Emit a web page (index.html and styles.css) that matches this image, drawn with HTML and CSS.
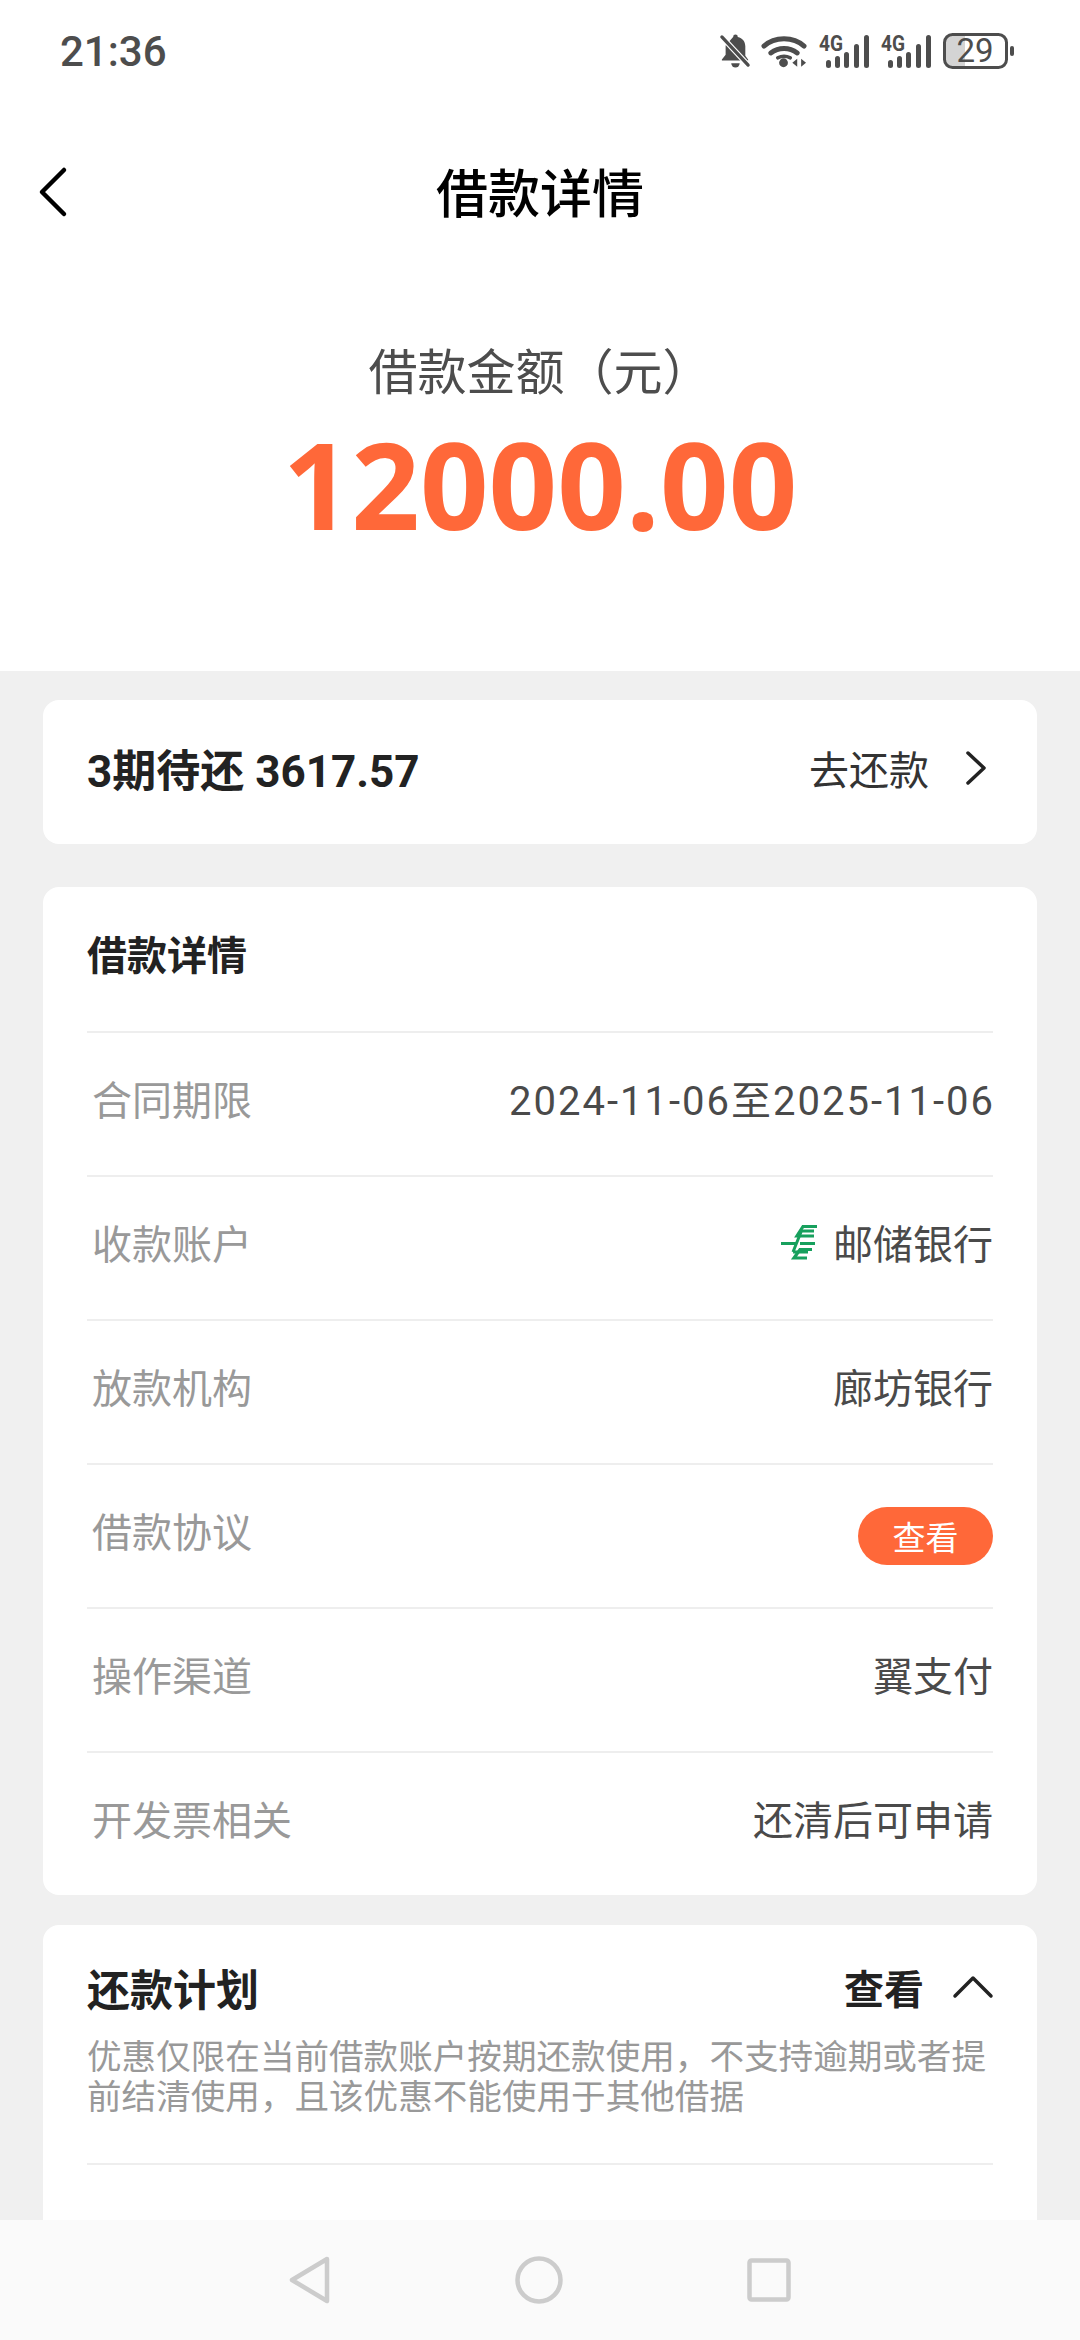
FILE: index.html
```html
<!DOCTYPE html>
<html>
	<head>
		<meta charset="UTF-8">
		<title>借款详情</title>
		<link rel="stylesheet" href="styles.css">
	</head>
	<body>
		<div class="top">
			<div class="status">
				<span class="time">21:36</span>
				<div class="status-icons">
					<svg class="ic-bell" width="30" height="34" viewBox="0 0 32 36">
						<path d="M14 3a2.500 2.500 0 0 1 5 0c5 1 8 5 8 10v10l3 4v1H2v-1l4-5V12z" fill="#4d4d4d"/>
						<path d="M12 31h9a4.500 4.500 0 0 1-9 0z" fill="#4d4d4d"/>
						<path d="M2 3l28 30" stroke="#fff" stroke-width="6"/>
						<path d="M2 3l28 30" stroke="#4d4d4d" stroke-width="3.500" stroke-linecap="round"/>
					</svg>
					<svg class="ic-wifi" width="45" height="34" viewBox="0 0 46 34">
						<path d="M2 12C13 2 32 2 43 12M9 19c8-6 19-6 27 0" fill="none" stroke="#4d4d4d" stroke-width="5" stroke-linecap="round"/>
						<path d="M16 24c4-2 9-2 13 0" fill="none" stroke="#4d4d4d" stroke-width="3.500" stroke-linecap="round"/>
						<circle cx="22" cy="29" r="4.500" fill="#4d4d4d"/>
						<path d="M36 25v8l-5-4zM40 25v8l5-4z" fill="#4d4d4d"/>
					</svg>
					<svg class="ic-sig" width="50" height="34" viewBox="0 0 50 34">
						<text x="0" y="17" class="sig-text" textLength="24" lengthAdjust="spacingAndGlyphs">4G</text>
						<rect x="7" y="26" width="5" height="8" rx="2.500"/>
						<rect x="16" y="22" width="5" height="12" rx="2.500"/>
						<rect x="25" y="18" width="5" height="16" rx="2.500"/>
						<rect x="35" y="10" width="5" height="24" rx="2.500"/>
						<rect x="45" y="1" width="5" height="33" rx="2.500"/>
					</svg>
					<svg class="ic-sig" width="50" height="34" viewBox="0 0 50 34">
						<text x="0" y="17" class="sig-text" textLength="24" lengthAdjust="spacingAndGlyphs">4G</text>
						<rect x="7" y="26" width="5" height="8" rx="2.500"/>
						<rect x="16" y="22" width="5" height="12" rx="2.500"/>
						<rect x="25" y="18" width="5" height="16" rx="2.500"/>
						<rect x="35" y="10" width="5" height="24" rx="2.500"/>
						<rect x="45" y="1" width="5" height="33" rx="2.500"/>
					</svg>
					<svg class="ic-bat" width="72" height="36" viewBox="0 0 72 36">
						<path d="M10 2h12v32H10a8 8 0 0 1-8-8V10a8 8 0 0 1 8-8z" fill="#d4d4d4"/>
						<rect x="1.500" y="1.500" width="62" height="33" rx="8" fill="none" stroke="#4d4d4d" stroke-width="3"/>
						<rect x="67" y="13" width="4" height="10" rx="2" fill="#4d4d4d"/>
						<text x="32" y="29" text-anchor="middle" class="bat-text">29</text>
					</svg>
				</div>
			</div>
			<div class="bar">
				<svg class="back" width="30" height="50" viewBox="0 0 30 50"><path d="M27 3L5 25l22 22" fill="none" stroke="#000" stroke-width="4.500" stroke-linecap="round" stroke-linejoin="round"/></svg>
				<h1>借款详情</h1>
			</div>
			<div class="hero">
				<div class="hero-label">借款金额（元）</div>
				<div class="amount">12000.00</div>
			</div>
		</div>

		<div class="list">
			<div class="card pay">
				<span class="pay-left">3期待还 3617.57</span>
				<span class="pay-right">
					去还款
					<svg width="22" height="34" viewBox="0 0 22 34"><path d="M3 2l16 15L3 32" fill="none" stroke="#222" stroke-width="3.500" stroke-linecap="round" stroke-linejoin="round"/></svg>
				</span>
			</div>

			<div class="card">
				<div class="card-head">借款详情</div>
				<div class="row"><span class="row-label">合同期限</span><span class="row-val date">2024-11-06至2025-11-06</span></div>
				<div class="row">
					<span class="row-label">收款账户</span>
					<span class="row-val bank">
						<svg width="36" height="36" viewBox="0 0 36 36">
							<path d="M36 2.500H22L16 12H33M0 19.500H15M19 19.500H34M31 25.500H19L13 34H26" fill="none" stroke="#17a05d" stroke-width="3.200"/>
							<path d="M33 7H19M20 8L12 28M12 28H27" fill="none" stroke="#17a05d" stroke-width="3"/>
						</svg>
						邮储银行
					</span>
				</div>
				<div class="row"><span class="row-label">放款机构</span><span class="row-val">廊坊银行</span></div>
				<div class="row"><span class="row-label">借款协议</span><span class="pill">查看</span></div>
				<div class="row"><span class="row-label">操作渠道</span><span class="row-val">翼支付</span></div>
				<div class="row"><span class="row-label">开发票相关</span><span class="row-val">还清后可申请</span></div>
			</div>

			<div class="card plan">
				<div class="plan-head">
					<span class="plan-title">还款计划</span>
					<span class="plan-more">
						查看
						<svg width="40" height="22" viewBox="0 0 40 22"><path d="M2 20L20 2l18 18" fill="none" stroke="#222" stroke-width="3.500" stroke-linecap="round" stroke-linejoin="round"/></svg>
					</span>
				</div>
				<p class="plan-desc">优惠仅限在当前借款账户按期还款使用，不支持逾期或者提前结清使用，且该优惠不能使用于其他借据</p>
				<div class="plan-rest"></div>
			</div>
		</div>

		<div class="nav">
			<svg width="42" height="48" viewBox="0 0 42 48"><path d="M38 3L3 24l35 21z" fill="none" stroke="#ccc" stroke-width="4.500" stroke-linejoin="round"/></svg>
			<svg width="48" height="48" viewBox="0 0 48 48"><circle cx="24" cy="24" r="21.500" fill="none" stroke="#ccc" stroke-width="4.500"/></svg>
			<svg width="44" height="44" viewBox="0 0 44 44"><rect x="2.500" y="2.500" width="39" height="39" rx="2" fill="none" stroke="#ccc" stroke-width="4.500"/></svg>
		</div>
	</body>
</html>
```

FILE: styles.css
```css
*{margin:0;padding:0;box-sizing:border-box;font-family:"Roboto","Noto Sans CJK SC",sans-serif;}
html,body{height:100%;}
body{
	width:1080px;
	height:2340px;
	overflow:hidden;
	position:relative;
	background:#f0f0f0;
}
svg{display:block;overflow:visible;}

.top{
	height:671px;
	background:#fff;
}
.status{
	height:102px;
	display:flex;
	justify-content:space-between;
	align-items:center;
	padding:0 65px 0 60px;
}
.time{
	font-size:42px;
	font-weight:500;
	color:#4d4d4d;
}
.status-icons{
	display:flex;
	align-items:center;
	gap:12px;
}
.ic-sig rect{fill:#4d4d4d;}
.sig-text{
	font-size:22px;
	font-weight:700;
	fill:#4d4d4d;
}
.bat-text{
	font-size:33px;
	fill:#4d4d4d;
}

.bar{
	height:180px;
	padding-bottom:3px;
	display:flex;
	align-items:center;
	justify-content:center;
	position:relative;
}
.back{
	position:absolute;
	left:37px;
	top:65px;
}
.bar h1{
	font-size:52px;
	font-weight:500;
	color:#000;
}
.hero{
	padding-top:62px;
	text-align:center;
}
.hero-label{
	font-size:49px;
	line-height:60px;
	color:#4d4d4d;
}
.amount{
	margin-top:15px;
	font-family:"Open Sans",sans-serif;
	font-size:120px;
	font-weight:700;
	line-height:130px;
	color:#ff6839;
}

.list{
	display:flex;
	flex-direction:column;
	padding:29px 43px 0;
}
.card{
	background:#fff;
	border-radius:16px;
	margin-bottom:43px;
	padding:0 44px;
}
.card:nth-child(2){margin-bottom:30px;}
.pay{
	height:144px;
	padding-bottom:8px;
	display:flex;
	justify-content:space-between;
	align-items:center;
}
.pay-left{
	font-size:44px;
	font-weight:700;
	color:#222;
}
.pay-right{
	display:flex;
	align-items:center;
	gap:36px;
	margin-right:6px;
	font-size:40px;
	color:#333;
}
.card-head{
	height:144px;
	padding-bottom:12px;
	display:flex;
	align-items:center;
	font-size:40px;
	font-weight:700;
	color:#222;
}
.row{
	height:144px;
	display:flex;
	justify-content:space-between;
	align-items:center;
	border-top:2px solid #eee;
}
.row-label{
	font-size:40px;
	color:#999;
	padding:0 0 12px 5px;
}
.row-val{
	font-size:40px;
	color:#4a4a4a;
	padding-bottom:12px;
}
.date{letter-spacing:2px;margin-right:-2px;}
.bank{
	display:flex;
	align-items:center;
	gap:16px;
}
.pill{
	width:135px;
	height:58px;
	border-radius:29px;
	background:#ff6839;
	color:#fff;
	font-size:33px;
	display:flex;
	align-items:center;
	justify-content:center;
}

.plan{height:420px;margin-bottom:0;}
.plan-head{
	display:flex;
	justify-content:space-between;
	align-items:center;
	padding-top:36px;
	height:88px;
}
.plan-title{
	font-size:43px;
	font-weight:700;
	color:#222;
}
.plan-more{
	display:flex;
	align-items:center;
	gap:29px;
	font-size:40px;
	font-weight:700;
	color:#222;
}
.plan-desc{
	font-size:34.600px;
	line-height:40px;
	color:#999;
	margin-top:23.500px;
}
.plan-rest{
	margin-top:46px;
	border-top:2px solid #eee;
}

.nav{
	position:absolute;
	left:0;
	bottom:0;
	width:100%;
	height:120px;
	background:#fafafa;
	display:flex;
	justify-content:center;
	align-items:center;
	gap:184px;
}
```
